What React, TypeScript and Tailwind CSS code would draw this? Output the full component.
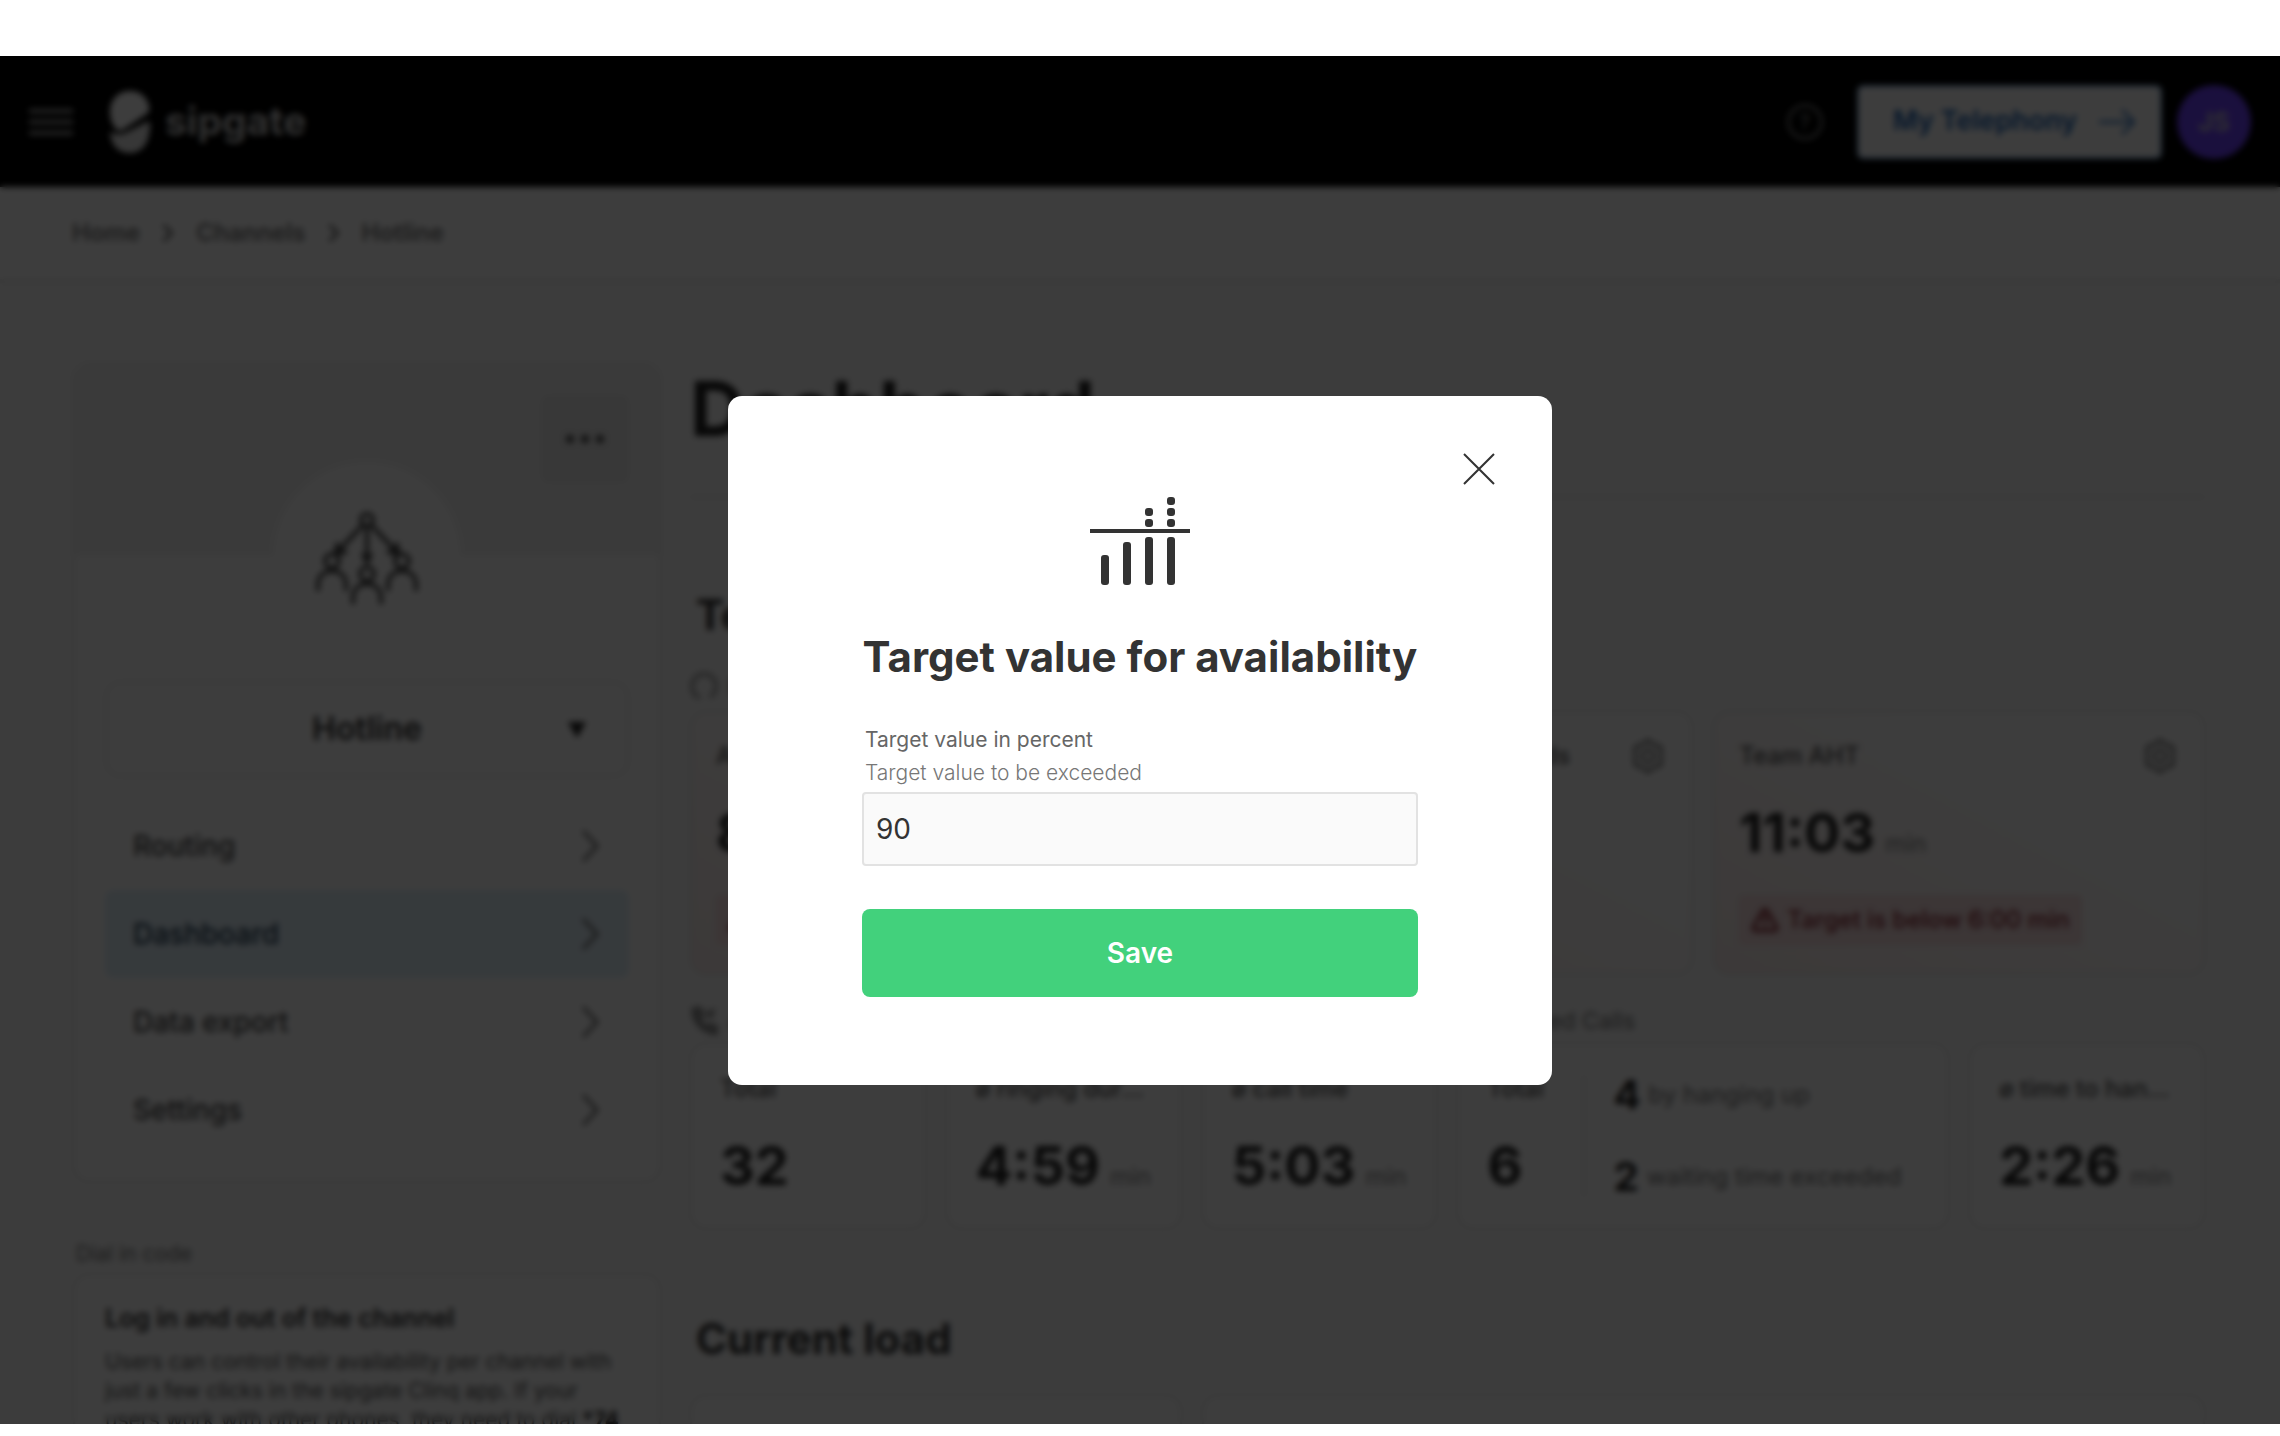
import React, { useState } from 'react';
import { ChevronRight, PhoneMissed, TriangleAlert } from 'lucide-react';

const navItems = ['Routing', 'Dashboard', 'Data export', 'Settings'];

function SipgateMark() {
  return (
    <svg width="42" height="64" viewBox="0 0 42 64" fill="#fff" aria-hidden="true">
      <path d="M21 1C9 1 1 10 1 22c0 7 2 12 6 17 2 2 5 2 8 0l21-14c4-2 5-5 4-9C38 7 31 1 21 1Z" />
      <path d="M18 42 40 31c2 5 1 9 0 13-1 11-9 19-19 19C11 63 4 57 2 48c-1-3-1-4-1-6 6 3 11 3 17 0Z" opacity="0.9" />
    </svg>
  );
}

function HotlineIcon() {
  return (
    <svg width="104" height="98" viewBox="0 0 104 98" fill="none" stroke="#444" strokeWidth="4" aria-hidden="true">
      <circle cx="52" cy="13" r="6" />
      <path d="M48 18 27 40M56 18l21 22M52 19v32" />
      <path d="m21 35 12 11-14 3zM83 35 71 46l14 3zM46 47h12l-6 11z" fill="#444" strokeWidth="1" />
      <circle cx="17" cy="54" r="7" />
      <circle cx="87" cy="54" r="7" />
      <circle cx="52" cy="67" r="7" />
      <path d="M3 84v-6c0-9 6-14 14-14s14 5 14 14v6M73 84v-6c0-9 6-14 14-14s14 5 14 14v6M38 97v-6c0-9 6-14 14-14s14 5 14 14v6" />
    </svg>
  );
}

function GearIcon() {
  return (
    <svg width="36" height="38" viewBox="0 0 36 38" fill="none" stroke="#777" strokeWidth="3" strokeLinejoin="round" aria-hidden="true">
      <path d="m18 3 5 4 8 3v18l-8 3-5 4-5-4-8-3V10l8-3z" />
      <circle cx="18" cy="19" r="6" />
    </svg>
  );
}

function TeamStatusIcon() {
  return (
    <svg width="28" height="32" viewBox="0 0 28 32" fill="none" stroke="#888" strokeWidth="3" aria-hidden="true">
      <path d="M10 27C4 25 2 21 2 15S7 3 14 3s12 5 12 12c0 5-2 9-6 11" />
    </svg>
  );
}

function HandsetIcon() {
  return (
    <svg width="28" height="30" viewBox="0 0 28 30" fill="none" stroke="#888" strokeWidth="3" aria-hidden="true">
      <path d="M3 3c-1 12 9 23 23 25l1-7-7-3-4 3c-3-2-5-5-6-8l3-4-3-7z" fill="#999" />
      <path d="M18 10l7-7M18 4v6h6" />
    </svg>
  );
}

function TargetIcon() {
  return (
    <svg width="100" height="90" viewBox="0 0 100 90" fill="#333" aria-hidden="true">
      <rect x="0" y="32" width="100" height="4" />
      <rect x="11" y="58" width="8" height="30" rx="3" />
      <rect x="33" y="45" width="8" height="43" rx="3" />
      <rect x="55" y="40" width="8" height="48" rx="3" />
      <rect x="77" y="40" width="8" height="48" rx="3" />
      <rect x="55" y="22" width="8" height="8" rx="3" />
      <rect x="55" y="11" width="8" height="8" rx="3" />
      <rect x="77" y="22" width="8" height="8" rx="3" />
      <rect x="77" y="11" width="8" height="8" rx="3" />
      <rect x="77" y="0" width="8" height="8" rx="3" />
    </svg>
  );
}

function Header() {
  return (
    <header className="flex h-[131px] items-center bg-black px-[29px]">
      <button type="button" aria-label="Menu" className="flex w-11 flex-col gap-[7px]">
        <span className="h-1 bg-[#aaa]" />
        <span className="h-1 bg-[#aaa]" />
        <span className="h-1 bg-[#aaa]" />
      </button>
      <a href="#home" className="ml-9 flex items-center gap-[14px] text-[39px] font-bold text-[#ccc]">
        <SipgateMark />
        sipgate
      </a>
      <button
        type="button"
        aria-label="Help"
        className="ml-auto flex size-9 items-center justify-center rounded-full border-3 border-[#777] text-xl font-semibold text-[#777]"
      >
        ?
      </button>
      <a
        href="#telephony"
        className="ml-[34px] flex h-[74px] items-center gap-[22px] rounded-md border-2 border-[#7fb0e8] bg-white pr-[25px] pl-[34px] text-[27px] font-semibold text-[#1c64b5]"
      >
        My Telephony
        <svg width="36" height="28" viewBox="0 0 36 28" fill="none" stroke="#4a86cc" strokeWidth="3" aria-hidden="true">
          <path d="M0 14h34M23 2l12 12-12 12" />
        </svg>
      </a>
      <button type="button" className="ml-[15px] size-[74px] rounded-full bg-[#6f43ff] text-[26px] font-semibold text-[#ccc]">
        JS
      </button>
    </header>
  );
}

function Breadcrumbs() {
  return (
    <nav aria-label="Breadcrumb" className="flex h-24 items-center gap-[14px] border-b-4 border-[#eaeaea] bg-white px-[72px] pb-px text-2xl font-semibold text-[#777]">
      <a href="#home">Home</a>
      <ChevronRight size={28} strokeWidth={3} />
      <a href="#channels">Channels</a>
      <ChevronRight size={28} strokeWidth={3} />
      <a href="#hotline">Hotline</a>
    </nav>
  );
}

function Sidebar() {
  return (
    <aside className="w-[588px] shrink-0">
      <section className="rounded-2xl border-2 border-[#e6e6e6] bg-white">
        <div className="relative flex h-[191px] justify-end rounded-t-2xl bg-[#f3f3f3] p-[30px]">
          <button type="button" aria-label="More" className="flex size-[88px] items-center justify-center gap-[7px] rounded-lg bg-[#e8e8e8]">
            <span className="size-2 rounded-full bg-[#444]" />
            <span className="size-2 rounded-full bg-[#444]" />
            <span className="size-2 rounded-full bg-[#444]" />
          </button>
          <div className="absolute top-[98px] left-1/2 flex size-[186px] -translate-x-1/2 items-center justify-center rounded-full bg-white">
            <HotlineIcon />
          </div>
        </div>
        <div className="px-[30px] pt-[125px] pb-[26px]">
          <button type="button" className="relative h-24 w-full rounded-2xl border-2 border-[#e6e6e6] text-[32px] font-semibold text-[#333]">
            Hotline
            <svg width="20" height="18" viewBox="0 0 20 18" className="absolute top-[38px] right-10" aria-hidden="true">
              <path d="M1 1h18L10 17z" fill="#222" />
            </svg>
          </button>
          <nav className="mt-[25px]">
            {navItems.map((item) => (
              <a
                key={item}
                href={'#' + item}
                className={
                  item === 'Dashboard'
                    ? 'flex h-[88px] items-center justify-between rounded-lg bg-[#e2f1fa] px-7 text-[28px] font-medium text-[#1f3a50]'
                    : 'flex h-[88px] items-center justify-between px-7 text-[28px] font-medium text-[#444]'
                }
              >
                {item}
                <svg width="20" height="34" viewBox="0 0 20 34" fill="none" stroke="#666" strokeWidth="3" aria-hidden="true">
                  <path d="m2 2 14 15L2 32" />
                </svg>
              </a>
            ))}
          </nav>
        </div>
      </section>
      <p className="mt-[58px] ml-[3px] text-[21px] leading-7 text-[#777]">Dial in code</p>
      <section className="mt-[6px] rounded-2xl border-2 border-[#e6e6e6] bg-white px-[30px] py-6">
        <h2 className="text-[25px] leading-9 font-semibold text-[#333]">Log in and out of the channel</h2>
        <p className="mt-[11px] text-[21px] leading-[29px] text-[#555]">
          Users can control their availability per channel with just a few clicks in the sipgate Clinq app. If your users work with other
          phones, they need to dial <b className="text-[#222]">*74</b>
        </p>
      </section>
    </aside>
  );
}

function Value({ value, unit }: { value: string; unit?: string }) {
  return (
    <p className="flex items-baseline gap-[10px] text-[54px] leading-[60px] font-bold text-[#222]">
      {value}
      {unit && <span className="text-2xl font-normal text-[#888]">{unit}</span>}
    </p>
  );
}

function TargetCard({ title, value, unit, note }: { title: string; value: string; unit?: string; note?: string }) {
  return (
    <article className="col-span-2 h-[264px] rounded-2xl border-2 border-[#e6e6e6] bg-linear-to-tr from-[#fbeeec] to-white to-70% px-6 pt-6">
      <header className="flex items-center justify-between">
        <h3 className="text-2xl font-medium text-[#555]">{title}</h3>
        <button type="button" aria-label="Set target" className="mr-px">
          <GearIcon />
        </button>
      </header>
      <div className="mt-7">
        <Value value={value} unit={unit} />
      </div>
      {note && (
        <p className="mt-8 inline-flex h-[50px] items-center gap-2 rounded-sm bg-[#f8dfe0] px-3 text-2xl font-medium text-[#8c2a34]">
          <TriangleAlert size={28} strokeWidth={3} />
          {note}
        </p>
      )}
    </article>
  );
}

function SmallCard({ title, value, unit }: { title: string; value: string; unit?: string }) {
  return (
    <article className="h-[186px] rounded-2xl border-2 border-[#e6e6e6] bg-white px-7 pt-7">
      <h3 className="truncate text-2xl leading-8 font-medium text-[#555]">{title}</h3>
      <div className="mt-[31px]">
        <Value value={value} unit={unit} />
      </div>
    </article>
  );
}

function GroupLabel({ icon, children }: { icon: React.ReactNode; children: string }) {
  return (
    <p className="flex h-8 items-center gap-[10px] text-[23px] text-[#777]">
      {icon}
      {children}
    </p>
  );
}

function Dashboard() {
  return (
    <main className="min-w-0 flex-1">
      <h1 className="text-[76px] leading-[90px] font-bold text-[#222]">Dashboard</h1>
      <hr className="mt-[43px] border-t-2 border-[#e6e6e6]" />
      <h2 className="mt-[90px] ml-[6px] text-[42px] leading-[54px] font-bold text-[#333]">Team</h2>
      <div className="mt-[29px]">
        <GroupLabel icon={<TeamStatusIcon />}>Performance</GroupLabel>
      </div>
      <div className="mt-2 grid grid-cols-6 gap-x-5">
        <TargetCard title="Availability" value="84" unit="%" note="Target is above 90 %" />
        <TargetCard title="Calls answered in 20 seconds" value="71" unit="%" />
        <TargetCard title="Team AHT" value="11:03" unit="min" note="Target is below 6:00 min" />
      </div>
      <div className="mt-[30px] grid grid-cols-6 gap-x-5 gap-y-[6px]">
        <div className="col-span-3">
          <GroupLabel icon={<HandsetIcon />}>Answered Calls</GroupLabel>
        </div>
        <div className="col-span-3">
          <GroupLabel icon={<PhoneMissed size={30} />}>Missed Calls</GroupLabel>
        </div>
        <SmallCard title="Total" value="32" />
        <SmallCard title="ø ringing duration" value="4:59" unit="min" />
        <SmallCard title="ø call time" value="5:03" unit="min" />
        <article className="col-span-2 flex h-[186px] rounded-2xl border-2 border-[#e6e6e6] bg-white px-7 pt-7">
          <div className="w-24">
            <h3 className="text-2xl leading-8 font-medium text-[#555]">Total</h3>
            <div className="mt-[31px]">
              <Value value="6" />
            </div>
          </div>
          <ul className="mt-px flex h-[124px] flex-col justify-between border-l-2 border-[#e6e6e6] pl-7 text-[40px] leading-[42px] font-bold text-[#222]">
            <li className="flex items-center gap-2">
              4 <span className="text-2xl font-normal text-[#777]">by hanging up</span>
            </li>
            <li className="flex items-center gap-2">
              2 <span className="text-2xl font-normal text-[#777]">waiting time exceeded</span>
            </li>
          </ul>
        </article>
        <SmallCard title="ø time to hang up" value="2:26" unit="min" />
      </div>
      <h2 className="mt-[83px] ml-[6px] text-[42px] leading-[54px] font-bold text-[#333]">Current load</h2>
      <div className="mt-[29px] grid grid-cols-6 gap-x-5">
        <div className="col-span-2 h-44 rounded-2xl border-2 border-[#e6e6e6] bg-white" />
        <div className="col-span-4 h-44 rounded-2xl border-2 border-[#e6e6e6] bg-white" />
      </div>
    </main>
  );
}

function TargetDialog() {
  const [target, setTarget] = useState('90');
  return (
    <form
      role="dialog"
      aria-labelledby="dialog-title"
      onSubmit={(event) => event.preventDefault()}
      className="relative flex w-[824px] flex-col items-center rounded-[14px] bg-white px-[134px] pt-[101px] pb-[88px] text-[#333]"
    >
      <button type="button" aria-label="Close" className="absolute top-[57px] right-[57px]">
        <svg width="32" height="32" viewBox="0 0 32 32" stroke="#333" strokeWidth="2" aria-hidden="true">
          <path d="m1 1 30 30M31 1 1 31" />
        </svg>
      </button>
      <TargetIcon />
      <h2 id="dialog-title" className="mt-11 text-[42px] leading-[52px] font-bold whitespace-nowrap">
        Target value for availability
      </h2>
      <label htmlFor="target" className="mt-[41px] w-full px-[3px] text-[21px] leading-8 text-[#666]">
        Target value in percent
        <span className="mt-px block font-light text-[#777]">Target value to be exceeded</span>
      </label>
      <input
        id="target"
        type="text"
        inputMode="numeric"
        value={target}
        onChange={(event) => setTarget(event.target.value)}
        className="mt-[3px] h-[74px] w-full rounded-sm border-2 border-[#e2e2e2] bg-[#fafafa] px-3 text-[28px] text-[#333] outline-none"
      />
      <button type="submit" className="mt-[43px] h-[88px] w-full rounded-lg bg-[#42d17c] text-[28px] font-semibold text-white">
        Save
      </button>
    </form>
  );
}

export default function App() {
  return (
    <div className="flex h-screen flex-col bg-white pt-14 pb-3 font-['Inter','Liberation_Sans',sans-serif]">
      <div className="relative min-h-0 flex-1 overflow-hidden bg-[#fafafa]">
        <Header />
        <Breadcrumbs />
        <div className="flex gap-[29px] pt-20 pr-[75px] pl-[73px]">
          <Sidebar />
          <Dashboard />
        </div>
        <div className="absolute inset-0 flex items-center justify-center">
          <div className="absolute inset-0 bg-black/76 backdrop-blur-[3px]" />
          <TargetDialog />
        </div>
      </div>
    </div>
  );
}
